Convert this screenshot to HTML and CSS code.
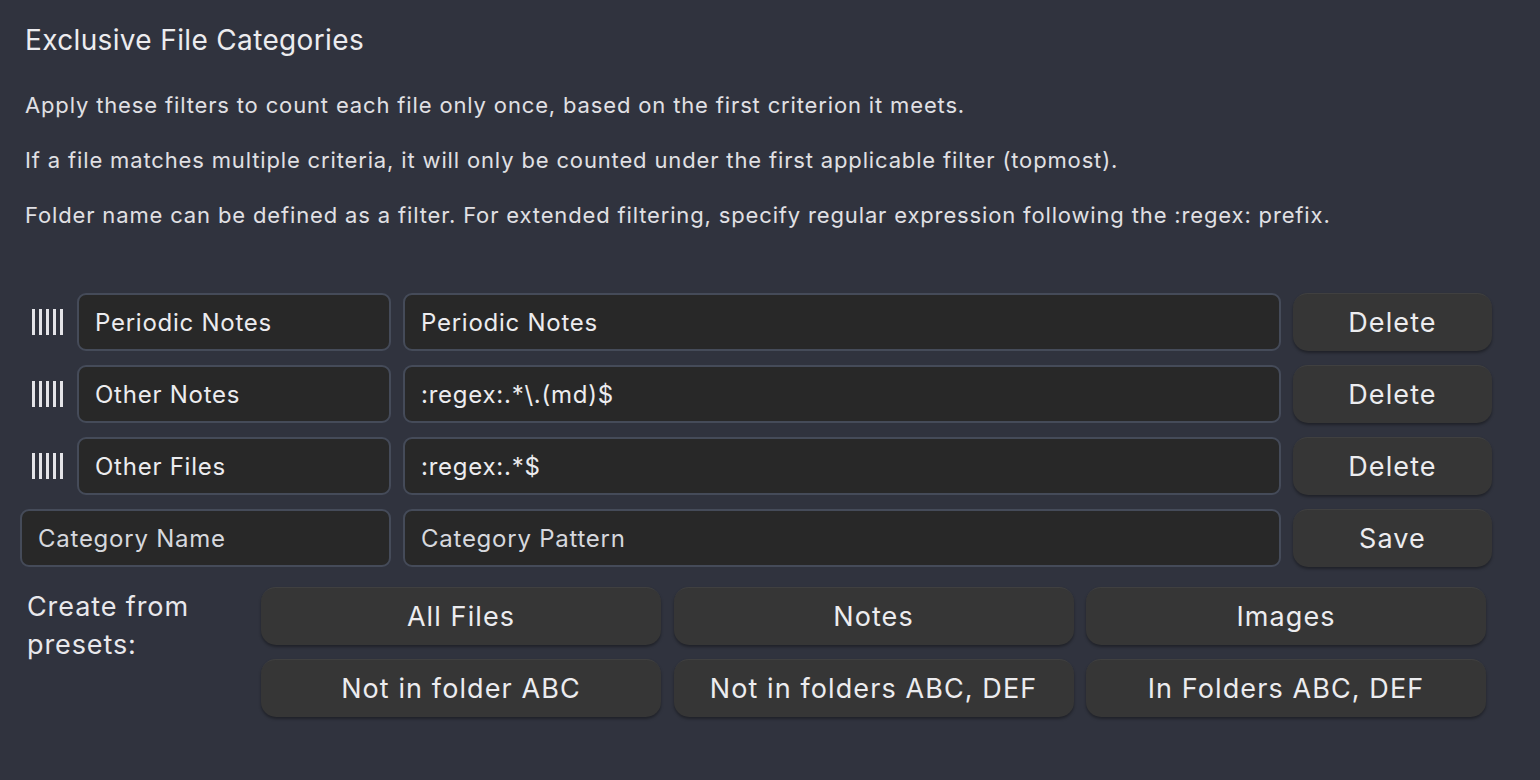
FILE: index.html
```html
<!DOCTYPE html>
<html lang="en">
<head>
<meta charset="utf-8">
<title>Exclusive File Categories</title>
<link rel="stylesheet" href="styles.css">
</head>
<body>
<main class="settings">
  <h2 class="title">Exclusive File Categories</h2>
  <p class="desc">Apply these filters to count each file only once, based on the first criterion it meets.</p>
  <p class="desc">If a file matches multiple criteria, it will only be counted under the first applicable filter (topmost).</p>
  <p class="desc">Folder name can be defined as a filter. For extended filtering, specify regular expression following the :regex: prefix.</p>

  <div class="rows">
    <div class="row">
      <span class="handle"><svg width="34" height="28" viewBox="0 0 34 28"><g fill="#e4e4e8"><rect x="1" y="1" width="3" height="26"/><rect x="8" y="1" width="3" height="26"/><rect x="15" y="1" width="3" height="26"/><rect x="22" y="1" width="3" height="26"/><rect x="29" y="1" width="3" height="26"/></g></svg></span>
      <input class="field" type="text" value="Periodic Notes">
      <input class="field" type="text" value="Periodic Notes">
      <button class="btn">Delete</button>
    </div>
    <div class="row">
      <span class="handle"><svg width="34" height="28" viewBox="0 0 34 28"><g fill="#e4e4e8"><rect x="1" y="1" width="3" height="26"/><rect x="8" y="1" width="3" height="26"/><rect x="15" y="1" width="3" height="26"/><rect x="22" y="1" width="3" height="26"/><rect x="29" y="1" width="3" height="26"/></g></svg></span>
      <input class="field" type="text" value="Other Notes">
      <input class="field" type="text" value=":regex:.*\.(md)$">
      <button class="btn">Delete</button>
    </div>
    <div class="row">
      <span class="handle"><svg width="34" height="28" viewBox="0 0 34 28"><g fill="#e4e4e8"><rect x="1" y="1" width="3" height="26"/><rect x="8" y="1" width="3" height="26"/><rect x="15" y="1" width="3" height="26"/><rect x="22" y="1" width="3" height="26"/><rect x="29" y="1" width="3" height="26"/></g></svg></span>
      <input class="field" type="text" value="Other Files">
      <input class="field" type="text" value=":regex:.*$">
      <button class="btn">Delete</button>
    </div>
    <div class="row">
      <input class="field field-wide" type="text" placeholder="Category Name">
      <input class="field" type="text" placeholder="Category Pattern">
      <button class="btn">Save</button>
    </div>
  </div>

  <div class="presets">
    <div class="presets-label">Create from presets:</div>
    <div class="preset-grid">
      <button class="btn preset">All Files</button>
      <button class="btn preset">Notes</button>
      <button class="btn preset">Images</button>
      <button class="btn preset">Not in folder ABC</button>
      <button class="btn preset">Not in folders ABC, DEF</button>
      <button class="btn preset">In Folders ABC, DEF</button>
    </div>
  </div>
</main>
</body>
</html>
```

FILE: styles.css
```css
html, body {
  margin: 0;
  padding: 0;
  background: #30333e;
  height: 100%;
}

body {
  font-family: Inter, "Noto Sans", "Liberation Sans", sans-serif;
  color: #e6e6ea;
}

.settings {
  padding: 22px 48px 0 20px;
}

.title {
  margin: 0 0 0 5px;
  font-size: 28px;
  letter-spacing: 0.35px;
  font-weight: 400;
  line-height: 36px;
  color: #ececef;
}

.desc {
  margin: 0 0 0 5px;
  font-size: 22px;
  letter-spacing: 0.85px;
  line-height: 28px;
  color: #e0e0e4;
}

.title + .desc {
  margin-top: 33px;
}

.desc + .desc {
  margin-top: 27px;
}

.rows {
  margin-top: 64px;
  display: flex;
  flex-direction: column;
  gap: 14px;
}

.row {
  display: grid;
  grid-template-columns: 45px 314px 878px 199px;
  column-gap: 12px;
  height: 58px;
}

.handle {
  display: flex;
  align-items: center;
  justify-content: flex-end;
}

.handle svg {
  display: block;
}

.field {
  box-sizing: border-box;
  height: 58px;
  margin: 0;
  padding: 0 16px;
  background: #282828;
  border: 2px solid #454b59;
  border-radius: 9px;
  color: #ececef;
  font-family: inherit;
  font-size: 24px;
  letter-spacing: 0.75px;
  outline: none;
}

.field::placeholder {
  color: #d6d8de;
  opacity: 1;
}

.field-wide {
  grid-column: 1 / span 2;
}

.btn {
  box-sizing: border-box;
  height: 58px;
  margin: 0;
  padding: 0;
  border: none;
  border-top: 1px solid #404040;
  border-radius: 15px;
  background: #363636;
  color: #ececef;
  font-family: inherit;
  font-size: 27px;
  letter-spacing: 1.1px;
  box-shadow: 0 2px 3px rgba(0, 0, 0, 0.35);
  cursor: pointer;
}

.presets {
  margin-top: 20px;
  display: flex;
  align-items: flex-start;
}

.presets-label {
  width: 200px;
  margin-left: 7px;
  margin-right: 34px;
  padding-top: 1px;
  font-size: 27px;
  letter-spacing: 0.9px;
  line-height: 38px;
  color: #e8e8ec;
}

.preset-grid {
  display: grid;
  grid-template-columns: repeat(3, 400px);
  column-gap: 12.5px;
  row-gap: 14px;
}
```
